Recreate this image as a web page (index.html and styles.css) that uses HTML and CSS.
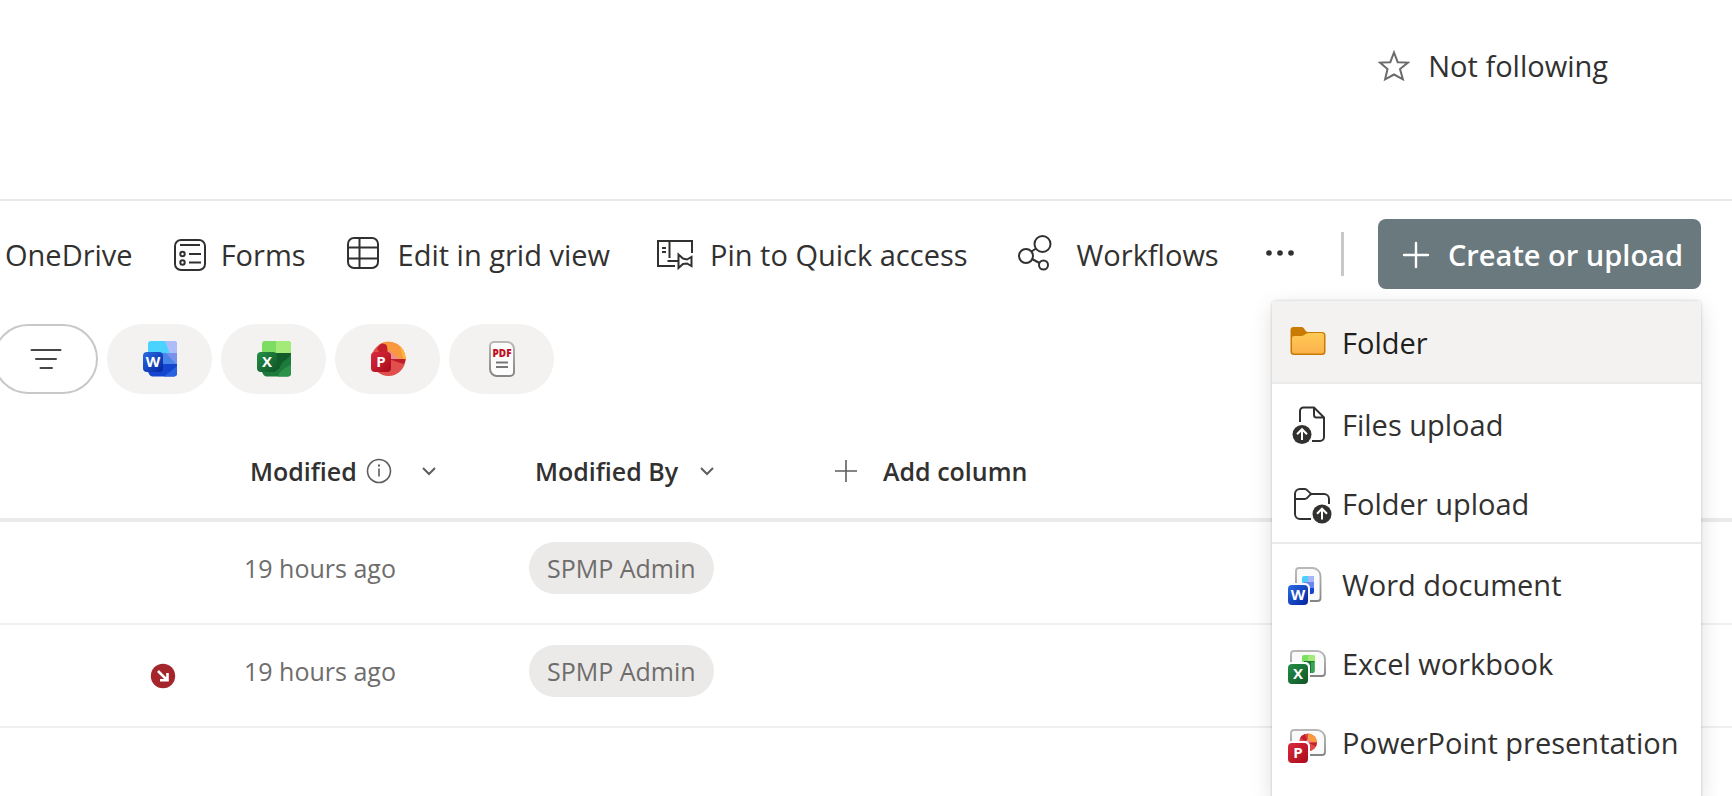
FILE: index.html
```html
<!DOCTYPE html>
<html lang="en">
<head>
<meta charset="utf-8">
<title>Documents</title>
<link rel="stylesheet" href="styles.css">
</head>
<body>
<header class="site-header">
  <button class="follow" type="button">
    <svg class="icon" width="32" height="32" viewBox="0 0 32 32" fill="none" stroke="#6b6b6b" stroke-width="2" stroke-linejoin="miter"><path d="M16 2.500 19.700 12.200 30 12.600 22 19 24.900 29.300 16 24.500 7.100 29.300 9.500 19 2 12.600 12.300 12.200Z"/></svg>
    <span>Not following</span>
  </button>
</header>

<nav class="command-bar" aria-label="Commands">
  <button class="command" type="button">OneDrive</button>
  <button class="command" type="button">
    <svg class="icon" width="32" height="32" viewBox="0 0 32 32" fill="none" stroke="#323130" stroke-width="2"><rect x="1" y="1" width="30" height="30" rx="6"/><path d="M6 6h20M15 15h12M15 23.500h12"/><circle cx="8.500" cy="15" r="2.200"/><circle cx="8.500" cy="23.500" r="2.200"/></svg>
    <span>Forms</span>
  </button>
  <button class="command" type="button">
    <svg class="icon icon-raised" width="36" height="32" viewBox="0 0 36 32" fill="none" stroke="#323130" stroke-width="2"><rect x="1" y="1" width="30" height="30" rx="6"/><path d="M12.500 1v30M1 10.500h30M1 21.500h30"/></svg>
    <span>Edit in grid view</span>
  </button>
  <button class="command" type="button">
    <svg class="icon" width="44" height="32" viewBox="-6 0 44 32" fill="none" stroke="#323130" stroke-width="2"><path d="M35 14V2H1v25h17M12.500 2v17M5 9h4M5 13h4M10.500 22H21M21.500 15.500 26 19.500 30 20.500 34.500 18v9L30 24.500 26 25 21.500 29Z"/></svg>
    <span>Pin to Quick access</span>
  </button>
  <button class="command" type="button">
    <svg class="icon icon-raised" width="53" height="36" viewBox="-9 0 53 36" fill="none" stroke="#323130" stroke-width="2"><circle cx="24.500" cy="9" r="8"/><circle cx="8" cy="21" r="7"/><circle cx="25.500" cy="30" r="4.500"/><path d="M13.500 16.500 18 13.500M14 24l7.500 4"/></svg>
    <span>Workflows</span>
  </button>
  <button class="command" type="button" aria-label="More">
    <svg class="icon icon-raised" width="34" height="6" viewBox="-6 0 34 6" fill="#323130"><circle cx="3" cy="3" r="2.800"/><circle cx="14" cy="3" r="2.800"/><circle cx="25" cy="3" r="2.800"/></svg>
  </button>
  <span class="divider"></span>
  <div class="create">
    <button class="create-button" type="button" aria-expanded="true">
      <svg class="icon" width="28" height="28" viewBox="0 0 28 28" stroke="#fff" stroke-width="2.400" stroke-linecap="round"><path d="M14 2v24M2 14h24"/></svg>
      <span>Create or upload</span>
    </button>
    <div class="menu" role="menu">
      <button class="menu-item menu-item-active" type="button" role="menuitem">
        <svg class="icon" width="48" height="40" viewBox="0 0 48 40"><defs><linearGradient id="fold" x1="0" y1="0" x2="0" y2="1"><stop offset="0" stop-color="#fdca55"/><stop offset="1" stop-color="#fdb14c"/></linearGradient></defs><path d="M2.500 14V7a3 3 0 0 1 3-3h8c3 0 3.500 5 6.500 5h14a3.500 3.500 0 0 1 3.500 3.500v16A3.500 3.500 0 0 1 34 32H6a3.500 3.500 0 0 1-3.500-3.500Z" fill="#c97a00"/><path d="M4 15a2 2 0 0 1 2-2h7c4 0 4-3 8-3h12.500a2.500 2.500 0 0 1 2.500 2.500V28a2.500 2.500 0 0 1-2.500 2.500h-27A2.500 2.500 0 0 1 4 28Z" fill="url(#fold)"/></svg>
        <span>Folder</span>
      </button>
      <hr class="menu-line">
      <button class="menu-item" type="button" role="menuitem">
        <svg class="icon" width="48" height="40" viewBox="0 0 48 40" fill="none" stroke="#323130" stroke-width="2"><path d="M12 17V6a3.500 3.500 0 0 1 3.500-3.500H26l10 10V32a4 4 0 0 1-4 4h-8M26 2.500V10a2.500 2.500 0 0 0 2.500 2.500H36"/><circle cx="14" cy="29.500" r="9.500" fill="#323130" stroke="none"/><path d="M14 35V24.500M9 29.200l5-5 5 5" stroke="#fff"/></svg>
        <span>Files upload</span>
      </button>
      <button class="menu-item" type="button" role="menuitem">
        <svg class="icon" width="48" height="40" viewBox="0 0 48 40" fill="none" stroke="#323130" stroke-width="2"><path d="M23 35H12a5 5 0 0 1-5-5V10a5 5 0 0 1 5-5h5c3 0 4 5 7 5h12a5 5 0 0 1 5 5v5M7 15h10c3.500 0 3.500-5 7-5"/><circle cx="34" cy="30" r="9.500" fill="#323130" stroke="none"/><path d="M34 35.500V25M29 29.700l5-5 5 5" stroke="#fff"/></svg>
        <span>Folder upload</span>
      </button>
      <hr class="menu-line">
      <button class="menu-item" type="button" role="menuitem">
        <svg class="icon" width="48" height="40" viewBox="0 0 48 40"><defs><linearGradient id="page" x1="0" y1="0" x2="0" y2="1"><stop offset="0" stop-color="#b8b8b8"/><stop offset="1" stop-color="#858585"/></linearGradient><linearGradient id="wtile" x1="0" y1="0" x2="1" y2="1"><stop offset="0" stop-color="#2a6be0"/><stop offset="1" stop-color="#0424a0"/></linearGradient></defs><path d="M11 3h14a8 8 0 0 1 7.500 8v22a3 3 0 0 1-3 3H11a3 3 0 0 1-3-3V6a3 3 0 0 1 3-3Z" fill="#fafafa" stroke="url(#page)" stroke-width="1.800"/><path d="M16 11h10v8H14v-6a2 2 0 0 1 2-2Z" fill="#4ad0ff"/><path d="M20 11h4a2 2 0 0 1 2 2v6h-6Z" fill="#a9b5f8"/><path d="M16 17h10v7H16Z" fill="#6b87ee"/><path d="M20 23h6v4a2 2 0 0 1-2 2h-4Z" fill="#1644d0"/><rect x="-2" y="18" width="24" height="24" rx="5" fill="#fafafa"/><rect x="0" y="20" width="20" height="20" rx="4" fill="url(#wtile)"/><text class="glyph" x="10" y="35" font-size="15">W</text></svg>
        <span>Word document</span>
      </button>
      <button class="menu-item" type="button" role="menuitem">
        <svg class="icon" width="48" height="40" viewBox="0 0 48 40"><defs><linearGradient id="xtile" x1="0" y1="0" x2="1" y2="1"><stop offset="0" stop-color="#249046"/><stop offset="1" stop-color="#0f5427"/></linearGradient></defs><path d="M6 7h23a8 8 0 0 1 8 8v14a3 3 0 0 1-3 3H6a3 3 0 0 1-3-3V10a3 3 0 0 1 3-3Z" fill="#fafafa" stroke="url(#page)" stroke-width="1.800"/><rect x="14" y="11" width="13" height="8" rx="2" fill="#7ae064"/><rect x="20" y="11" width="7" height="8" rx="2" fill="#a3ea78"/><path d="M16 17h10.500v10a2 2 0 0 1-2 2H16Z" fill="#1c7637"/><path d="M23 18h3.500v9a2 2 0 0 1-2 2H23Z" fill="#35a552"/><path d="M4 18h13a5 5 0 0 1 5 5v8H4Z" fill="#fafafa"/><rect x="-2" y="18" width="24" height="24" rx="5" fill="#fff"/><rect x="0" y="20" width="20" height="20" rx="4" fill="url(#xtile)"/><text class="glyph" x="10" y="35" font-size="15">X</text></svg>
        <span>Excel workbook</span>
      </button>
      <button class="menu-item" type="button" role="menuitem">
        <svg class="icon" width="48" height="40" viewBox="0 0 48 40"><defs><linearGradient id="ptile" x1="0" y1="0" x2="1" y2="1"><stop offset="0" stop-color="#da2b3b"/><stop offset="1" stop-color="#a80a1c"/></linearGradient></defs><path d="M6 7h23a8 8 0 0 1 8 8v14a3 3 0 0 1-3 3H6a3 3 0 0 1-3-3V10a3 3 0 0 1 3-3Z" fill="#fafafa" stroke="url(#page)" stroke-width="1.800"/><circle cx="20" cy="19.500" r="9" fill="#df4a46"/><path d="M20 19.500V10.500a9 9 0 0 1 9 9Z" fill="#f99a3c"/><path d="M20 19.500 17 11a9 9 0 0 0-5 4Z" fill="#c4202c"/><path d="M20 19.500h-3l3-4 4 4Z" fill="#f08a90"/><path d="M20 19.500h9l-1 4Z" fill="#c4202c"/><rect x="-2" y="18" width="24" height="24" rx="5" fill="#fff"/><rect x="0" y="20" width="20" height="20" rx="4" fill="url(#ptile)"/><text class="glyph" x="10" y="35" font-size="15">P</text></svg>
        <span>PowerPoint presentation</span>
      </button>
    </div>
  </div>
</nav>

<main>
  <div class="filters">
    <button class="pill pill-outline" type="button" aria-label="Filter"><svg class="icon" width="32" height="22" viewBox="0 0 32 22" stroke="#484644" stroke-width="2" stroke-linecap="round"><path d="M1.500 2h29M6 11h20M10.500 20h11.500"/></svg></button>
    <button class="pill" type="button" aria-label="Word files"><svg class="icon" width="36" height="36" viewBox="0 0 36 36"><path d="M9 0h23a3 3 0 0 1 3 3v10H6V3a3 3 0 0 1 3-3Z" fill="#4ad3ff"/><path d="M23 0h9a3 3 0 0 1 3 3v10h-7Z" fill="#aebdfa"/><path d="M6 12h29v13H6Z" fill="#4a86ea"/><path d="M24 12h11v12Z" fill="#7b92ec"/><path d="M6 23h29v9a3.500 3.500 0 0 1-3.500 3.500h-21C8 35.500 6 32 6 30Z" fill="#1345cf"/><path d="M22 35.500 35 25v7a3.500 3.500 0 0 1-3.500 3.500Z" fill="#2862dc"/><rect x="1" y="11" width="20" height="20" rx="4" fill="url(#wtile)"/><text class="glyph" x="11" y="26" font-size="15">W</text></svg></button>
    <button class="pill" type="button" aria-label="Excel files"><svg class="icon" width="36" height="36" viewBox="0 0 36 36"><path d="M9 0h23a3 3 0 0 1 3 3v10H6V3a3 3 0 0 1 3-3Z" fill="#7ddd62"/><path d="M20 0h12a3 3 0 0 1 3 3v9H20Z" fill="#a4ea78"/><path d="M6 12h29v20a3.500 3.500 0 0 1-3.500 3.500h-21C8 35.500 6 32 6 30Z" fill="#1c7a3a"/><path d="M18 12h17c-2 7-9 7-11 14-2 4-6 4-10 4Z" fill="#125c2a"/><path d="M22 35.500c2-7 9-9 13-12V32a3.500 3.500 0 0 1-3.500 3.500Z" fill="#2a924a"/><rect x="1" y="11" width="20" height="20" rx="4" fill="url(#xtile)"/><text class="glyph" x="11" y="26" font-size="15">X</text></svg></button>
    <button class="pill" type="button" aria-label="PowerPoint files"><svg class="icon" width="36" height="36" viewBox="0 0 36 36"><circle cx="18.500" cy="18" r="17" fill="#e04f4c"/><path d="M18.500 18 10 3a17 17 0 0 1 25.500 15Z" fill="#f9983e"/><path d="M30 5.500a17 17 0 0 1 5.500 14l-2-1Z" fill="#fdb838"/><path d="M18.500 18V9l11 9.500Z" fill="#ee8a90"/><path d="M18.500 18 17 5C15 2 12 2 10 3.500L7 8l6 8Z" fill="#c4202c"/><path d="M18.500 18h17c0 3-1 4-2 5Z" fill="#bd1c2a"/><rect x="1" y="11" width="20" height="20" rx="4" fill="url(#ptile)"/><text class="glyph" x="11" y="26" font-size="15">P</text></svg></button>
    <button class="pill" type="button" aria-label="PDF files"><svg class="icon" width="36" height="36" viewBox="-2 0 36 36"><path d="M8 1h13a7 7 0 0 1 7 7v23a4 4 0 0 1-4 4H11a7 7 0 0 1-7-7V5a4 4 0 0 1 4-4Z" fill="#fcfcfc" stroke="url(#page)" stroke-width="2"/><text class="glyph glyph-red" x="16" y="16" font-size="10">PDF</text><path d="M10 21.500h12M10 26h12" stroke="#777" stroke-width="1.800"/></svg></button>
  </div>

  <table class="files">
    <colgroup><col class="col-status"><col class="col-modified"><col class="col-author"><col></colgroup>
    <thead>
      <tr>
        <th></th>
        <th><button class="column-button" type="button"><span>Modified</span>
          <svg class="icon info" width="26" height="26" viewBox="0 0 26 26" fill="none" stroke="#605e5c" stroke-width="1.600"><circle cx="13" cy="13" r="11.500"/><path d="M13 10.500v8"/><path d="M13 6.500v2" stroke-width="2"/></svg>
          <svg class="icon chevron" width="14" height="10" viewBox="0 0 14 10" fill="none" stroke="#605e5c" stroke-width="2"><path d="m1 2 6 6 6-6"/></svg></button></th>
        <th><button class="column-button" type="button"><span>Modified By</span>
          <svg class="icon chevron-near" width="14" height="10" viewBox="0 0 14 10" fill="none" stroke="#605e5c" stroke-width="2"><path d="m1 2 6 6 6-6"/></svg></button></th>
        <th><button class="column-button add-column" type="button"><svg class="icon" width="22" height="22" viewBox="0 0 22 22" stroke="#605e5c" stroke-width="1.600"><path d="M11 0v22M0 11h22"/></svg><span>Add column</span></button></th>
      </tr>
    </thead>
    <tbody>
      <tr><td></td><td>19 hours ago</td><td><span class="person">SPMP Admin</span></td><td></td></tr>
      <tr><td class="status"><svg class="icon" width="26" height="26" viewBox="0 0 26 26"><circle cx="13" cy="13" r="12.200" fill="#a4262c"/><path d="m8 8 9 9M10 17.200h7.500V10" fill="none" stroke="#fff" stroke-width="2.600"/></svg></td><td>19 hours ago</td><td><span class="person">SPMP Admin</span></td><td></td></tr>
    </tbody>
  </table>
</main>
</body>
</html>
```
FILE: styles.css
```css
* { box-sizing: border-box; }
body {
  margin: 0;
  min-height: 100vh;
  overflow: hidden;
  background: #fff;
  color: #323130;
  font-family: "Open Sans", "Noto Sans", sans-serif;
  font-size: 29px;
  line-height: 40px;
}
button {
  margin: 0;
  padding: 0;
  border: 0;
  background: none;
  color: inherit;
  font: inherit;
  white-space: nowrap;
  cursor: pointer;
}
.icon { display: block; flex: none; }
.glyph {
  fill: #fff;
  font-family: "Open Sans", sans-serif;
  font-weight: 700;
  text-anchor: middle;
}
.glyph-red { fill: #c00d1e; font-weight: 800; }

.site-header {
  display: flex;
  justify-content: flex-end;
  height: 201px;
  padding: 46px 120px 0 0;
  border-bottom: 2px solid #eaeaea;
}
.follow { display: flex; align-items: center; gap: 18px; height: 40px; margin-right: 4px; }

.command-bar {
  display: flex;
  align-items: center;
  gap: 41px;
  height: 106px;
  padding: 0 31px 0 5px;
}
.command { display: flex; align-items: center; gap: 15px; height: 42px; padding-top: 2px; }
.icon-raised { margin-bottom: 4px; }
.divider { width: 3px; height: 44px; margin-left: auto; background: #c8c8c8; }
.create { position: relative; margin-left: -7px; }
.create-button {
  display: flex;
  align-items: center;
  gap: 18px;
  height: 70px;
  padding: 2px 18px 0 24px;
  border-radius: 8px;
  background: #69797e;
  color: #fff;
  font-weight: 600;
}
.menu {
  position: absolute;
  top: 100%;
  right: 0;
  z-index: 1;
  width: 429px;
  margin-top: 12px;
  padding-bottom: 20px;
  border-radius: 4px 4px 0 0;
  background: #fff;
  box-shadow: 0 0 3px rgba(0, 0, 0, .2), 0 6px 22px rgba(0, 0, 0, .13);
}
.menu-item {
  display: flex;
  align-items: center;
  gap: 6px;
  width: 100%;
  height: 79px;
  padding: 2px 0 0 16px;
}
.menu-item-active {
  height: 81px;
  border-radius: 4px 4px 0 0;
  background: #f3f2f1;
  color: #201f1e;
}
.menu-line { height: 2px; margin: 0; border: 0; background: #eaeaea; }

.filters { display: flex; gap: 9px; margin-left: -7px; padding-top: 17px; }
.pill {
  display: flex;
  align-items: center;
  justify-content: center;
  width: 105px;
  height: 70px;
  border-radius: 35px;
  background: #f3f2f1;
}
.pill-outline { border: 2px solid #c8c8c8; background: #fff; }

.files {
  width: 100%;
  margin-top: 28px;
  border-collapse: separate;
  border-spacing: 0;
  table-layout: fixed;
  font-size: 25px;
  line-height: 32px;
}
.col-status { width: 244px; }
.col-modified { width: 285px; }
.col-author { width: 306px; }
.files th { height: 100px; padding: 2px 0 0; border-bottom: 4px solid #eaeaea; text-align: left; }
.files td {
  height: 103px;
  padding: 0 0 10px;
  border-bottom: 2px solid #f0f0f0;
  color: #6f6d6b;
}
.files .status { padding: 0 0 0 150px; }
.column-button { display: flex; align-items: center; padding-left: 6px; font-weight: 600; }
.info { margin-left: 9px; }
.chevron { margin-left: 30px; }
.chevron-near { margin-left: 22px; }
.add-column { gap: 26px; padding-left: 0; }
.person {
  display: inline-block;
  padding: 10px 18px;
  border-radius: 27px;
  background: #ebeae9;
}
```
